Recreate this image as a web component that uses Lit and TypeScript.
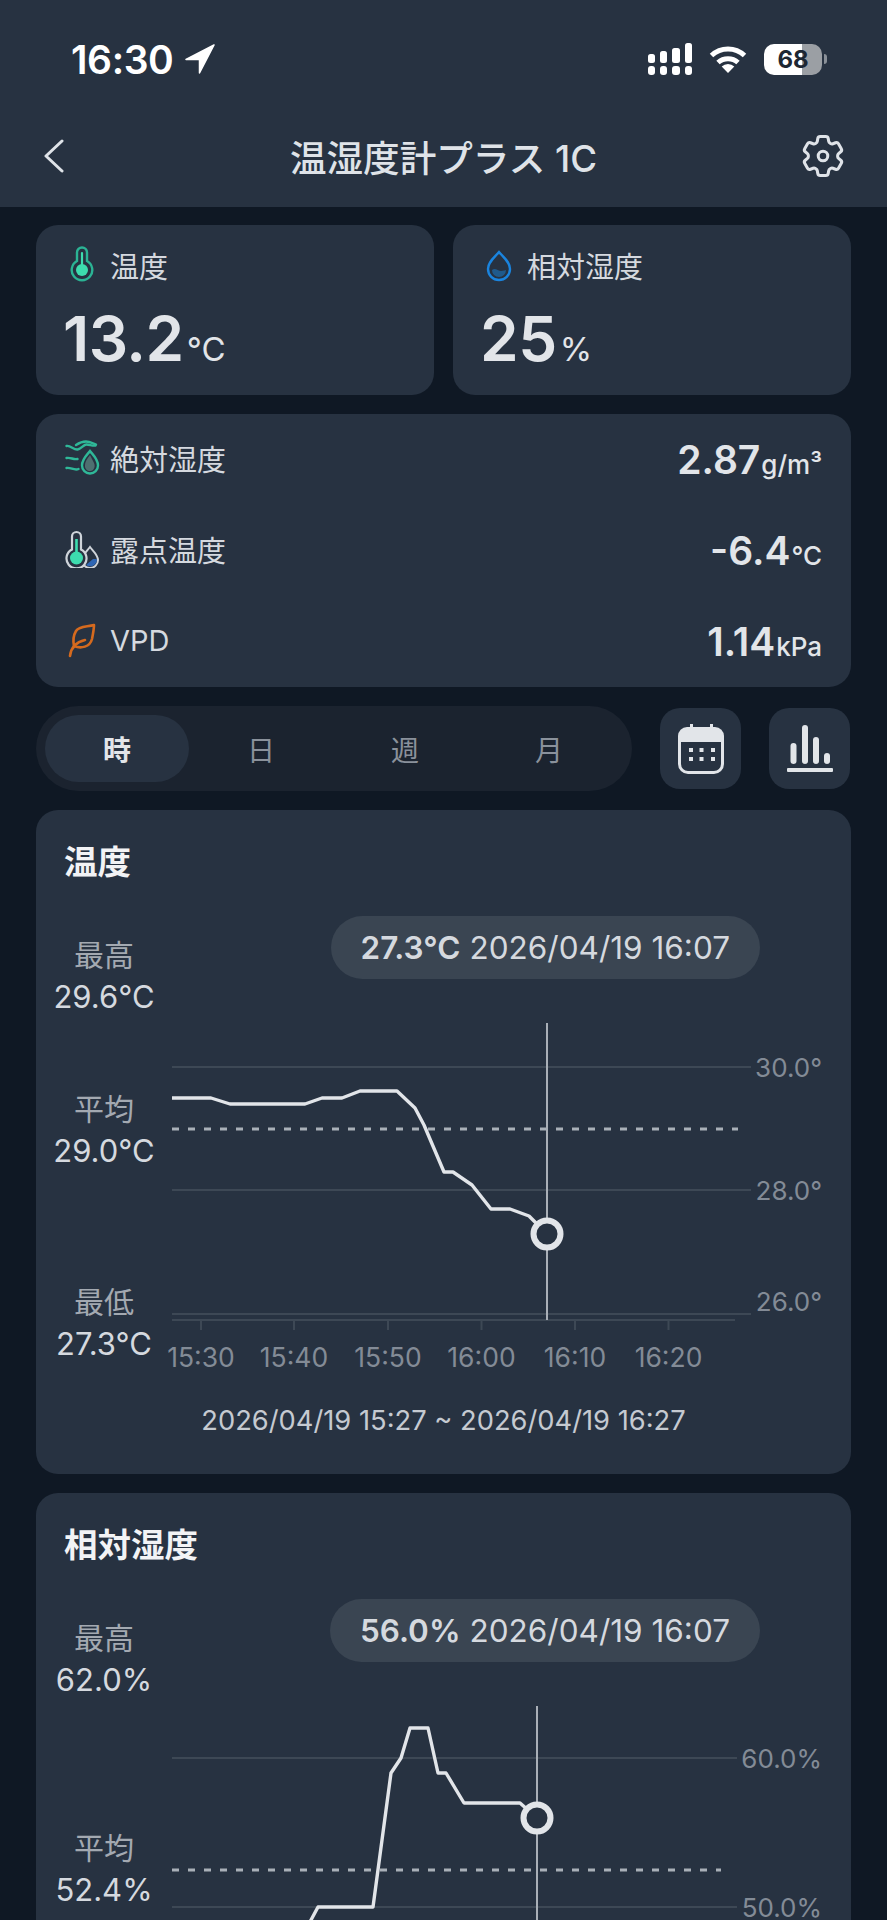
import { LitElement, html, css, svg } from "lit";
import { customElement } from "lit/decorators.js";

type Chart = {
  title: string;
  top: number;
  value: string;
  stamp: string;
  stats: { label: string; value: string; gap: number }[];
  grid: { y: number; label: string; x2: number; ly: number }[];
  avgY: number;
  avgX2: number;
  cursorX: number;
  cursorTop: number;
  cursorBottom: number;
  dotY: number;
  line: [number, number][];
  range: string;
  axis: boolean;
};

const charts: Chart[] = [
  {
    title: "温度",
    top: 810,
    value: "27.3°C",
    stamp: "2026/04/19 16:07",
    stats: [
      { label: "最高", value: "29.6°C", gap: 0 },
      { label: "平均", value: "29.0°C", gap: 72 },
      { label: "最低", value: "27.3°C", gap: 111 },
    ],
    grid: [
      { y: 1067, label: "30.0°", x2: 751, ly: 1068 },
      { y: 1190, label: "28.0°", x2: 751, ly: 1191 },
      { y: 1314, label: "26.0°", x2: 751, ly: 1302 },
    ],
    avgY: 1129,
    avgX2: 738,
    cursorX: 547,
    cursorTop: 1023,
    cursorBottom: 1320,
    dotY: 1234,
    line: [
      [172, 1098], [211, 1098], [230, 1104], [305, 1104], [322, 1098], [342, 1098],
      [360, 1091], [397, 1091], [415, 1108], [424, 1125], [444, 1172], [453, 1172],
      [472, 1185], [491, 1209], [510, 1209], [529, 1216], [547, 1234],
    ],
    range: "2026/04/19 15:27 ~ 2026/04/19 16:27",
    axis: true,
  },
  {
    title: "相対湿度",
    top: 1493,
    value: "56.0%",
    stamp: "2026/04/19 16:07",
    stats: [
      { label: "最高", value: "62.0%", gap: 0 },
      { label: "平均", value: "52.4%", gap: 128 },
    ],
    grid: [
      { y: 1758, label: "60.0%", x2: 737, ly: 1759 },
      { y: 1907, label: "50.0%", x2: 737, ly: 1908 },
    ],
    avgY: 1870,
    avgX2: 721,
    cursorX: 537,
    cursorTop: 1706,
    cursorBottom: 2003,
    dotY: 1818,
    line: [
      [300, 1945], [311, 1920], [318, 1907], [373, 1907], [391, 1773], [401, 1758],
      [410, 1728], [428, 1728], [438, 1773], [446, 1773], [464, 1803], [520, 1803], [537, 1818],
    ],
    range: "",
    axis: false,
  },
];

const ticks = [
  [201, "15:30"], [294, "15:40"], [388, "15:50"], [481.5, "16:00"], [575, "16:10"], [668.5, "16:20"],
] as [number, string][];

@customElement("app-root")
export class AppRoot extends LitElement {
  static styles = css`
    :host {
      display: block;
      width: 887px;
      height: 1920px;
      overflow: hidden;
      background: #0f1824;
      font-family: Inter, "Noto Sans CJK JP", sans-serif;
      color: #dfe3e8;
    }
    .head { background: #273241; height: 207px; display: flex; flex-direction: column; }
    .status {
      height: 118px; display: flex; align-items: center; justify-content: space-between;
      padding: 0 60px 0 71px;
    }
    .time { display: flex; align-items: center; gap: 12px; font-size: 39px; font-weight: 600; color: #fff; letter-spacing: -0.4px; }
    .sys { display: flex; align-items: center; gap: 17px; }
    .batt {
      width: 58px; height: 31px; border-radius: 10px; position: relative; overflow: hidden;
      background: linear-gradient(90deg, #fff 0 66%, #9b9fa4 66% 100%);
      display: flex; align-items: center; justify-content: center;
      font-size: 24px; font-weight: 700; color: #1d2733;
    }
    .battwrap { display: flex; align-items: center; gap: 2px; }
    .tip { width: 3px; height: 10px; border-radius: 0 3px 3px 0; background: #8a9098; }
    .nav { height: 76px; display: grid; grid-template-columns: 1fr auto 1fr; align-items: center; padding: 0 38px 0 44px; }
    .nav-title { font-size: 36.6px; font-weight: 500; color: #dfe3e8; margin-left: -6px; }
    .gear { justify-self: end; }
    .body { padding: 18px 36px 0; display: flex; flex-direction: column; gap: 19px; }
    .tops { display: grid; grid-template-columns: 398px 398px; gap: 19px; }
    .card { background: #273241; border-radius: 22px; }
    .top { height: 170px; padding: 21px 29px 0; box-sizing: border-box; }
    .lab { display: flex; align-items: center; gap: 10px; height: 38px; font-size: 29px; color: #d5d9df; }
    .ic { width: 35px; height: 38px; flex: none; }
    .big { font-size: 62px; font-weight: 600; line-height: 76px; margin: 17px 0 0 -2px; color: #e2e5e9; letter-spacing: -0.5px; }
    .big small { font-size: 33px; font-weight: 400; letter-spacing: 0; margin-left: 3px; }
    .rows { height: 273px; padding: 0 29px; display: flex; flex-direction: column; }
    .row { height: 91px; display: flex; align-items: center; justify-content: space-between; }
    .row .lab { margin-top: -3px; }
    .rv { font-size: 39px; font-weight: 600; color: #e2e5e9; }
    .rv small { font-size: 26px; font-weight: 500; margin-left: 1px; }
    .ctl { display: flex; align-items: center; gap: 28px; height: 85px; }
    .tabs {
      width: 596px; height: 85px; box-sizing: border-box; padding: 9px; border-radius: 43px;
      background: #1b232f; display: grid; grid-template-columns: repeat(4, 144px);
    }
    .tab { display: flex; align-items: center; justify-content: center; font-size: 28px; color: #8a919b; border-radius: 34px; }
    .tab.on { background: #273241; color: #e2e5e9; font-weight: 600; }
    .sq { width: 81px; height: 81px; border-radius: 20px; background: #273241; display: flex; align-items: center; justify-content: center; }
    .chart { position: relative; height: 664px; display: flex; flex-direction: column; flex: none; }
    .chart svg.plot { position: absolute; left: 0; top: 0; }
    .ct { font-size: 33.5px; font-weight: 700; line-height: 40px; padding: 32px 0 0 28px; color: #f2f3f5; }
    .stats { margin-top: 53px; width: 136px; text-align: center; font-size: 31px; line-height: 41px; position: relative; }
    .st-l { color: #a3a9b1; font-size: 30px; }
    .st-v { color: #d5d9df; }
    .pill {
      position: absolute; right: 91px; top: 106px; height: 63px; box-sizing: border-box;
      padding: 0 30px; border-radius: 32px; background: #3a4552;
      display: flex; align-items: center; gap: 9px; font-size: 31.5px; color: #d5d9df; white-space: nowrap;
    }
    .pill b { font-weight: 600; }
    .range { margin-top: auto; text-align: center; font-size: 27.3px; line-height: 36px; padding-bottom: 35px; color: #c5cad1; position: relative; }
    .tick { font-size: 26.5px; fill: #838b96; font-family: Inter, sans-serif; }
    .ylab { font-size: 26px; fill: #838b96; font-family: Inter, sans-serif; }
  `;

  private renderChart(c: Chart) {
    const pts = c.line.map((p) => p.join(",")).join(" ");
    return html`<div class="card chart">
      <svg class="plot" width="815" height="664" viewBox="36 ${c.top} 815 664">
        ${c.grid.map((g) => svg`<line x1="172" x2="${g.x2}" y1="${g.y}" y2="${g.y}" stroke="#3d4855" stroke-width="2"/>
          <text class="ylab" x="822" y="${g.ly + 9}" text-anchor="end">${g.label}</text>`)}
        ${c.axis
          ? svg`<line x1="172" x2="735" y1="1320" y2="1320" stroke="#3d4855" stroke-width="2"/>
            ${ticks.map(([x, t]) => svg`<line x1="${x}" x2="${x}" y1="1320" y2="1330" stroke="#3d4855" stroke-width="2"/>
              <text class="tick" x="${x}" y="1367" text-anchor="middle">${t}</text>`)}`
          : ""}
        <line x1="172" x2="${c.avgX2}" y1="${c.avgY}" y2="${c.avgY}" stroke="#a9b0b8" stroke-width="3" stroke-dasharray="7 9"/>
        <line x1="${c.cursorX}" x2="${c.cursorX}" y1="${c.cursorTop}" y2="${c.cursorBottom}" stroke="#a9afb7" stroke-width="2"/>
        <polyline points="${pts}" fill="none" stroke="#e2e5e9" stroke-width="3.4" stroke-linejoin="round"/>
        <circle cx="${c.cursorX}" cy="${c.dotY}" r="13.5" fill="#273241" stroke="#e2e5e9" stroke-width="6"/>
      </svg>
      <div class="ct">${c.title}</div>
      <div class="stats">
        ${c.stats.map((s) => html`<div style="margin-top:${s.gap}px"><div class="st-l">${s.label}</div><div class="st-v">${s.value}</div></div>`)}
      </div>
      <div class="pill"><b>${c.value}</b><span>${c.stamp}</span></div>
      ${c.range ? html`<div class="range">${c.range}</div>` : ""}
    </div>`;
  }

  render() {
    return html`
      <div class="head">
        <div class="status">
          <div class="time">16:30
            <svg width="30" height="30" viewBox="0 0 30 30"><path d="M29 1 1 15.5h13.5V29z" fill="#fff" stroke="#fff" stroke-width="1.5" stroke-linejoin="round"/></svg>
          </div>
          <div class="sys">
            <svg width="44" height="32" viewBox="0 0 44 32" fill="#fff">
              <rect x="0" y="11" width="7" height="9" rx="2.5"/><rect x="12" y="8" width="7" height="12" rx="2.5"/><rect x="24" y="5" width="8" height="15" rx="2.5"/><rect x="37" y="0" width="7" height="20" rx="2.5"/>
              <rect x="0" y="23" width="7" height="9" rx="3"/><rect x="12" y="23" width="7" height="9" rx="3"/><rect x="24" y="23" width="8" height="9" rx="3"/><rect x="37" y="23" width="7" height="9" rx="3"/>
            </svg>
            <svg width="38" height="28" viewBox="0 0 38 28" fill="none" stroke="#fff" stroke-width="5">
              <path d="M2.5 10.5a24 24 0 0 1 33 0"/><path d="M9 17.5a15 15 0 0 1 20 0"/>
              <path d="M19 28 12.7 21.5a9 9 0 0 1 12.6 0z" fill="#fff" stroke="none"/>
            </svg>
            <div class="battwrap"><div class="batt">68</div><div class="tip"></div></div>
          </div>
        </div>
        <div class="nav">
          <svg width="20" height="34" viewBox="0 0 20 34" fill="none" stroke="#dfe3e8" stroke-width="3" stroke-linecap="round" stroke-linejoin="round"><path d="M18 2 2 17l16 15"/></svg>
          <div class="nav-title">温湿度計プラス 1C</div>
          <svg class="gear" width="52" height="52" viewBox="0 0 24 24" fill="none" stroke="#dfe3e8" stroke-width="1.4" stroke-linejoin="round">
            <path d="M9.594 3.94c.09-.542.56-.94 1.11-.94h2.593c.55 0 1.02.398 1.11.94l.213 1.281c.063.374.313.686.645.87.074.04.147.083.22.127.325.196.72.257 1.075.124l1.217-.456a1.125 1.125 0 0 1 1.37.49l1.296 2.247a1.125 1.125 0 0 1-.26 1.431l-1.003.827c-.293.241-.438.613-.43.992a7.723 7.723 0 0 1 0 .255c-.008.378.137.75.43.991l1.004.827c.424.35.534.955.26 1.43l-1.298 2.247a1.125 1.125 0 0 1-1.369.491l-1.217-.456c-.355-.133-.75-.072-1.076.124a6.47 6.47 0 0 1-.22.128c-.331.183-.581.495-.644.869l-.213 1.281c-.09.543-.56.94-1.11.94h-2.594c-.55 0-1.019-.398-1.11-.94l-.213-1.281c-.062-.374-.312-.686-.644-.87a6.52 6.52 0 0 1-.22-.127c-.325-.196-.72-.257-1.076-.124l-1.217.456a1.125 1.125 0 0 1-1.369-.49l-1.297-2.247a1.125 1.125 0 0 1 .26-1.431l1.004-.827c.292-.24.437-.613.43-.991a6.932 6.932 0 0 1 0-.255c.007-.38-.138-.751-.43-.992l-1.004-.827a1.125 1.125 0 0 1-.26-1.43l1.297-2.247a1.125 1.125 0 0 1 1.37-.491l1.216.456c.356.133.751.072 1.076-.124.072-.044.146-.086.22-.128.332-.183.582-.495.644-.869l.214-1.28Z"/>
            <circle cx="12" cy="12" r="2.2"/>
          </svg>
        </div>
      </div>
      <div class="body">
        <div class="tops">
          <div class="card top">
            <div class="lab">
              <svg class="ic" viewBox="0 0 35 38">
                <path d="M12 6.5a5 5 0 0 1 10 0v8.5a10.3 10.3 0 1 1-10 0z" fill="none" stroke="#2bb394" stroke-width="2.4"/>
                <circle cx="17" cy="24" r="6" fill="#3ddcae"/><path d="M17 7v17" stroke="#3ddcae" stroke-width="2.2" stroke-linecap="round"/>
              </svg>温度
            </div>
            <div class="big">13.2<small>°C</small></div>
          </div>
          <div class="card top">
            <div class="lab">
              <svg class="ic" viewBox="0 0 35 38"><path d="M17 6c5 6 11 10 11 17a11 11 0 0 1-22 0c0-7 6-11 11-17z" fill="none" stroke="#1a84de" stroke-width="2.4"/><path d="M10 24c3-3 6 1 9 1s4-1 5-1a7 7 0 0 1-14 0z" fill="#1f5a8c"/></svg>相対湿度
            </div>
            <div class="big">25<small>%</small></div>
          </div>
        </div>
        <div class="card rows">
          <div class="row">
            <div class="lab">
              <svg class="ic" viewBox="0 0 35 38" fill="none" stroke="#2fb898" stroke-width="2.4" stroke-linecap="round">
                <path d="M1.500 7c4-1 7 4 11 3.500s6-5 9-5 6 1.500 9 1"/><path d="M11 6c3-2 7-3.500 10-3.500s6 1.500 10 3"/>
                <path d="M1.500 19c4-1 7 2 11 1"/><path d="M1.500 29c4-1 8 3 12 1"/>
                <path d="M25 12c3 4 8 8 8 14.500a8 8 0 0 1-16 0c0-6.500 5-10.500 8-14.500z"/>
                <path d="M25 16c-2 3-5 6-5 10.500a5 5 0 0 0 8 4.500c2-2 2-5 1-7z" fill="#4e6f70" stroke="none"/>
              </svg>絶対湿度
            </div>
            <div class="rv">2.87<small>g/m³</small></div>
          </div>
          <div class="row">
            <div class="lab">
              <svg class="ic" viewBox="0 0 35 38">
                <path d="M25 17c3 4 8 8 8 13a8 8 0 0 1-16 0c0-5 5-9 8-13z" fill="#273241" stroke="#cfd4da" stroke-width="2"/>
                <path d="M32 29a7 7 0 0 1-11 6l7-6z" fill="#2f66b4"/>
                <path d="M7 6.500a4.500 4.500 0 0 1 9 0v13a10 10 0 1 1-9 0z" fill="#273241" stroke="#cfd4da" stroke-width="2.200"/>
                <circle cx="11.500" cy="28" r="6.500" fill="#3ddcae"/><path d="M11.500 9v18" stroke="#3ddcae" stroke-width="2.600"/>
              </svg>露点温度
            </div>
            <div class="rv">-6.4<small>°C</small></div>
          </div>
          <div class="row">
            <div class="lab">
              <svg class="ic" viewBox="0 0 35 38" fill="none" stroke="#d56a1e" stroke-width="2.600" stroke-linecap="round" stroke-linejoin="round">
                <path d="M29 4 C22 6 14 5 11 10 C8 15 8 20 9 25 C16 28 25 26 27 18 C28 13 29 8 29 4z"/>
                <path d="M5 35c1-8 6-14 15-16"/>
              </svg>VPD
            </div>
            <div class="rv">1.14<small>kPa</small></div>
          </div>
        </div>
        <div class="ctl">
          <div class="tabs">
            <div class="tab on">時</div><div class="tab">日</div><div class="tab">週</div><div class="tab">月</div>
          </div>
          <div class="sq">
            <svg width="46" height="50" viewBox="0 0 46 50">
              <rect x="12" y="0" width="3" height="6" fill="#e2e5e9"/><rect x="32" y="0" width="3" height="6" fill="#e2e5e9"/>
              <path d="M9 3h28a9 9 0 0 1 9 9v6H0v-6a9 9 0 0 1 9-9z" fill="#e2e5e9"/>
              <path d="M1.500 17v23a8.500 8.500 0 0 0 8.500 8.500h26a8.500 8.500 0 0 0 8.500-8.500V17" fill="none" stroke="#e2e5e9" stroke-width="3"/>
              <g fill="#e2e5e9"><rect x="11" y="24" width="4" height="4"/><rect x="21.500" y="24" width="4" height="4"/><rect x="33" y="24" width="4" height="4"/><rect x="11" y="33" width="4" height="4"/><rect x="21.500" y="33" width="4" height="4"/><rect x="33" y="33" width="4" height="4"/></g>
            </svg>
          </div>
          <div class="sq">
            <svg width="46" height="47" viewBox="0 0 46 47" fill="#e2e5e9">
              <rect x="3.500" y="18" width="6" height="21" rx="3"/><rect x="15" y="0" width="6" height="39" rx="3"/><rect x="26" y="12" width="6" height="27" rx="3"/><rect x="37" y="28" width="6" height="11" rx="3"/>
              <rect x="0" y="43" width="46" height="4" rx="1"/>
            </svg>
          </div>
        </div>
        ${charts.map((c) => this.renderChart(c))}
      </div>
    `;
  }
}
